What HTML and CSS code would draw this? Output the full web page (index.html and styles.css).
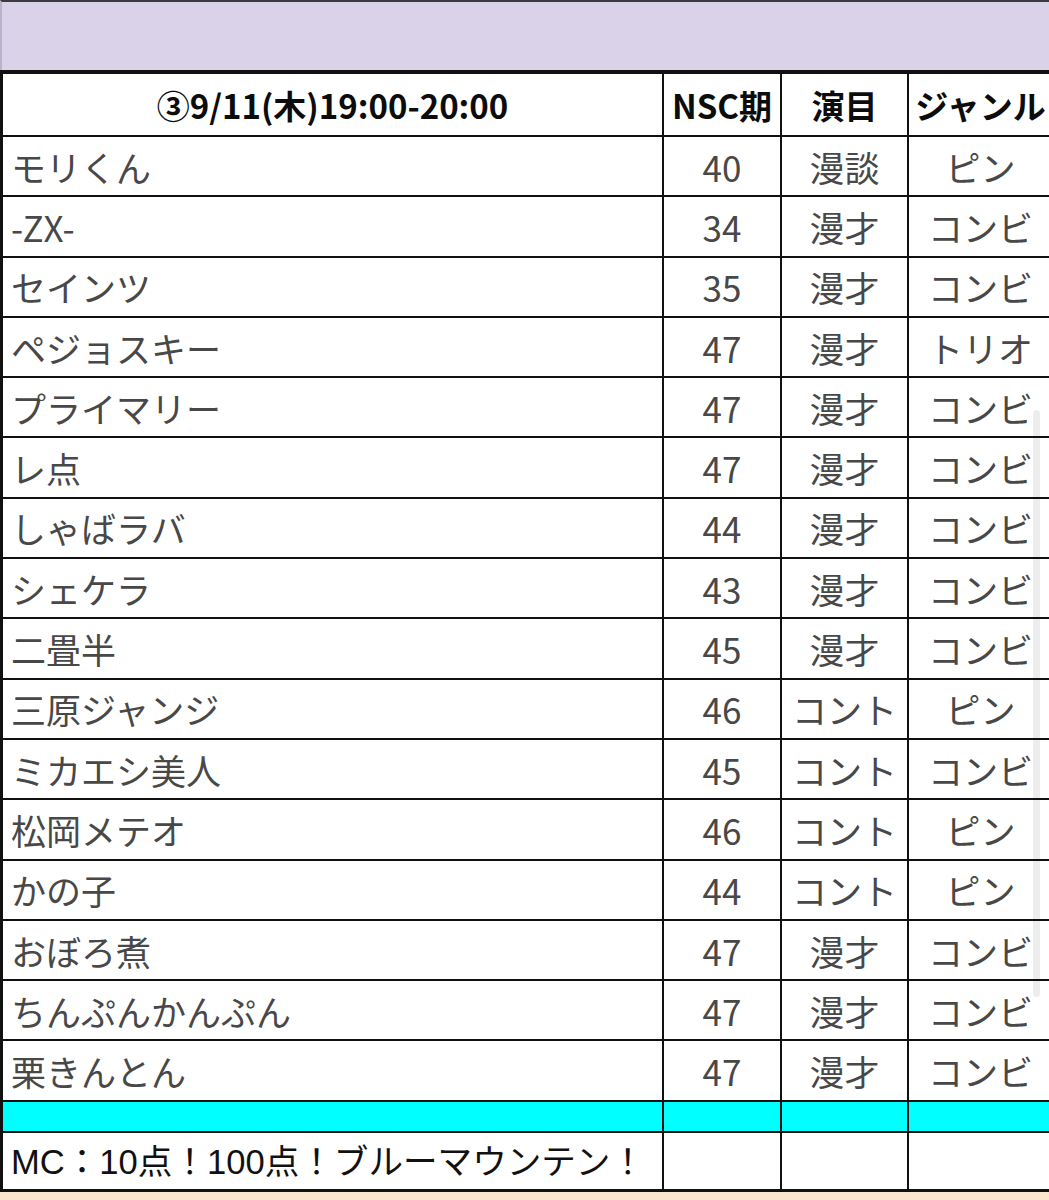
FILE: index.html
```html
<!DOCTYPE html>
<html lang="ja">
<head>
<meta charset="utf-8">
<title>出演者一覧</title>
<link rel="stylesheet" href="styles.css">
</head>
<body>
<div class="sheet">
  <div class="band"></div>
  <div class="grid">
    <div class="c head name-h">③9/11(木)19:00-20:00</div>
    <div class="c head">NSC期</div>
    <div class="c head">演目</div>
    <div class="c head">ジャンル</div>

    <div class="c name">モリくん</div><div class="c">40</div><div class="c">漫談</div><div class="c">ピン</div>
    <div class="c name">-ZX-</div><div class="c">34</div><div class="c">漫才</div><div class="c">コンビ</div>
    <div class="c name">セインツ</div><div class="c">35</div><div class="c">漫才</div><div class="c">コンビ</div>
    <div class="c name">ペジョスキー</div><div class="c">47</div><div class="c">漫才</div><div class="c">トリオ</div>
    <div class="c name">プライマリー</div><div class="c">47</div><div class="c">漫才</div><div class="c">コンビ</div>
    <div class="c name">レ点</div><div class="c">47</div><div class="c">漫才</div><div class="c">コンビ</div>
    <div class="c name">しゃばラバ</div><div class="c">44</div><div class="c">漫才</div><div class="c">コンビ</div>
    <div class="c name">シェケラ</div><div class="c">43</div><div class="c">漫才</div><div class="c">コンビ</div>
    <div class="c name">二畳半</div><div class="c">45</div><div class="c">漫才</div><div class="c">コンビ</div>
    <div class="c name">三原ジャンジ</div><div class="c">46</div><div class="c">コント</div><div class="c">ピン</div>
    <div class="c name">ミカエシ美人</div><div class="c">45</div><div class="c">コント</div><div class="c">コンビ</div>
    <div class="c name">松岡メテオ</div><div class="c">46</div><div class="c">コント</div><div class="c">ピン</div>
    <div class="c name">かの子</div><div class="c">44</div><div class="c">コント</div><div class="c">ピン</div>
    <div class="c name">おぼろ煮</div><div class="c">47</div><div class="c">漫才</div><div class="c">コンビ</div>
    <div class="c name">ちんぷんかんぷん</div><div class="c">47</div><div class="c">漫才</div><div class="c">コンビ</div>
    <div class="c name">栗きんとん</div><div class="c">47</div><div class="c">漫才</div><div class="c">コンビ</div>

    <div class="c cyan"></div><div class="c cyan"></div><div class="c cyan"></div><div class="c cyan"></div>

    <div class="c name mc">MC：10点！100点！ブルーマウンテン！</div><div class="c"></div><div class="c"></div><div class="c"></div>
  </div>
  <div class="peach"></div>
  <div class="scrollbar"></div>
</div>
</body>
</html>
```
FILE: styles.css
```css
html, body {
  margin: 0;
  padding: 0;
  overflow: hidden;
  background: #ffffff;
}

.sheet {
  position: relative;
  width: 1049px;
  height: 1200px;
  overflow: hidden;
  font-family: "Noto Sans CJK JP", "Noto Sans", sans-serif;
}

.band {
  height: 68px;
  background: #d9d2e9;
  border-top: 2px solid #3a3a44;
  border-left: 2px solid #b9b2cb;
}

.grid {
  display: grid;
  width: 1052px;
  grid-template-columns: 659px 116px 125px 143px;
  grid-template-rows: 61px repeat(16, 58.3px) 29px 56px;
  column-gap: 2px;
  row-gap: 2px;
  background: #111111;
  padding: 4px 0 3px 3px;
  box-sizing: border-box;
}

.c {
  background: #ffffff;
  display: flex;
  align-items: center;
  justify-content: center;
  font-size: 35px;
  line-height: 1;
  color: #484848;
  white-space: nowrap;
  overflow: hidden;
}

.head {
  font-weight: 700;
  font-size: 33px;
  color: #0c0c0c;
  padding-top: 2px;
}

.name {
  justify-content: flex-start;
  padding-left: 8px;
}

.name-h {
  justify-content: center;
  padding-left: 0;
}

.cyan {
  background: #00ffff;
}

.mc {
  font-family: "Liberation Sans", "Noto Sans CJK JP", sans-serif;
  color: #111111;
  font-size: 34.6px;
  padding-top: 4px;
}

.peach {
  height: 8px;
  background: #fce5cd;
}

.scrollbar {
  position: absolute;
  left: 1033px;
  top: 410px;
  width: 7px;
  height: 587px;
  border-radius: 4px;
  background: rgba(0, 0, 0, 0.07);
}
```
